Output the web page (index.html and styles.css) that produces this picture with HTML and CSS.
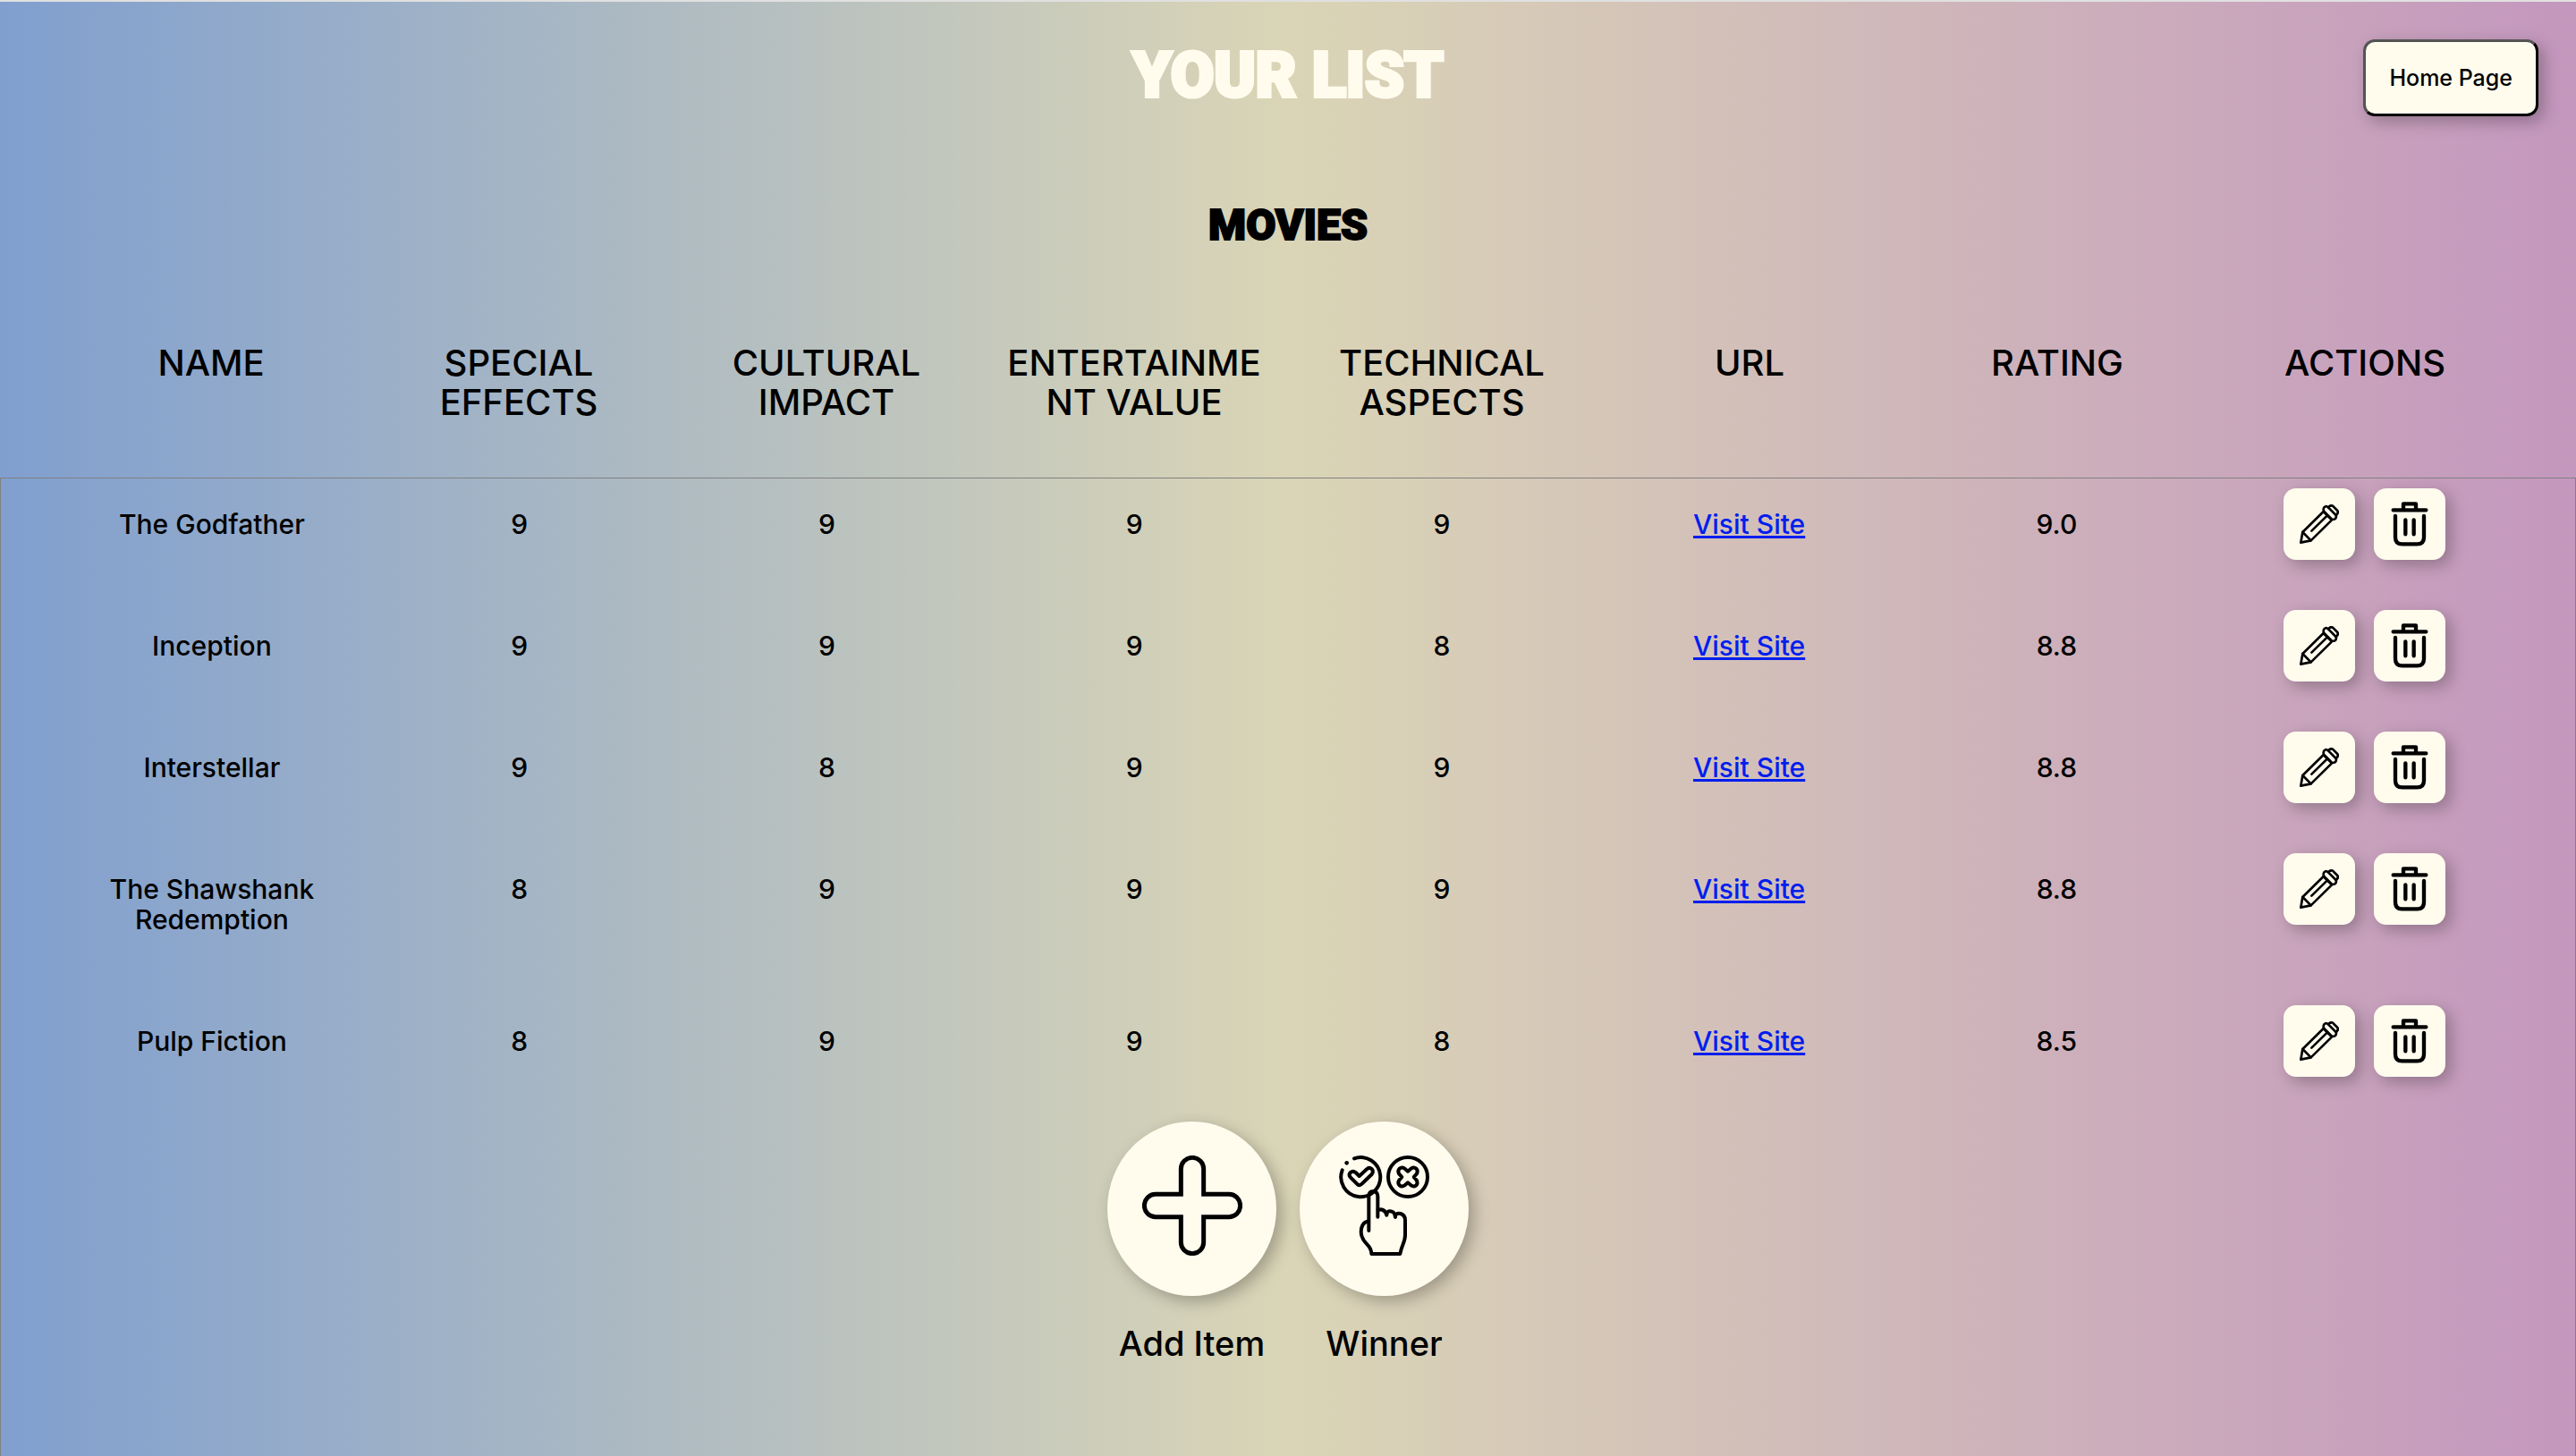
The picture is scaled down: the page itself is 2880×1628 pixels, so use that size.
FILE: index.html
```
<!DOCTYPE html>
<html lang="en">
<head>
<meta charset="utf-8">
<title>Your List</title>
<link rel="stylesheet" href="styles.css">
</head>
<body>
<svg class="sprite" aria-hidden="true">
  <symbol id="pencil" viewBox="0 0 132 132">
    <g fill="none" stroke="currentColor" stroke-width="8" stroke-linejoin="round" stroke-linecap="round">
      <path d="M4 128 10 93 80 24 108 52 38 121Z"/>
      <path d="M10 93 38 121M40 89 92 38"/>
      <path d="M82 10Q89 3 96 10L122 36Q125 44 118 49Q112 52 106 48L82 24Q78 17 82 10Z"/>
      <path d="M97 10Q103 1 111 5L127 21Q132 28 122 36"/>
    </g>
  </symbol>
  <symbol id="trash" viewBox="0 0 124 150">
    <g fill="none" stroke="currentColor" stroke-width="13" stroke-linecap="round">
      <path d="M7 28H117M41 24V7H83V24" stroke-linejoin="round"/>
      <path d="M14 48V119Q14 142 37 142H87Q110 142 110 119V48M48 61V109M76 61V109"/>
    </g>
  </symbol>
  <symbol id="plus" viewBox="0 0 336 336">
    <path d="M130 130V45A38 38 0 0 1 206 45V130H291A38 38 0 0 1 291 206H206V291A38 38 0 0 1 130 291V206H45A38 38 0 0 1 45 130Z" fill="none" stroke="currentColor" stroke-width="15"/>
  </symbol>
  <symbol id="vote" viewBox="0 0 336 336">
    <g fill="none" stroke="currentColor" stroke-width="12" stroke-linecap="round" stroke-linejoin="round">
      <path d="M66 10A66 66 0 1 1 26 49"/>
      <circle cx="246" cy="72" r="66"/>
      <path d="M53 57Q46 66 54 74L75 95Q83 104 92 95L125 63Q132 54 125 45Q116 38 108 46L83 69L71 57Q62 50 53 57Z"/>
      <path d="M246 53L258 43Q266 38 274 44Q281 51 276 61L266 72L276 84Q280 94 274 100Q266 106 258 101L246 91L234 101Q226 106 218 100Q211 93 216 84L226 72L216 61Q211 51 218 44Q226 38 234 43Z"/>
      <path d="M115 252V136Q116 120 130 120Q144 121 145 136V206"/>
      <path d="M146 182Q169 177 175 200Q176 181 195 189Q202 192 204 207Q204 191 221 195Q237 200 237 217V267Q237 280 229 300Q223 314 220 330H124Q123 312 110 299Q95 284 91 269Q86 250 94 234Q100 223 111 221"/>
    </g>
    <circle cx="41" cy="25" r="7" fill="currentColor"/>
  </symbol>
</svg>
<header class="topbar">
  <h1 class="title">YOUR LIST</h1>
  <button class="home" type="button">Home Page</button>
</header>
<main class="main">
  <h2 class="subtitle">MOVIES</h2>
  <table class="list">
    <thead>
      <tr><th>NAME</th><th>SPECIAL EFFECTS</th><th>CULTURAL IMPACT</th><th>ENTERTAINME<wbr>NT VALUE</th><th>TECHNICAL ASPECTS</th><th>URL</th><th>RATING</th><th>ACTIONS</th></tr>
    </thead>
    <tbody>
      <tr><td>The Godfather</td><td>9</td><td>9</td><td>9</td><td>9</td><td><a href="#">Visit Site</a></td><td>9.0</td>
        <td class="actions"><button type="button" aria-label="Edit"><svg class="pencil"><use href="#pencil"/></svg></button><button type="button" aria-label="Delete"><svg class="trash"><use href="#trash"/></svg></button></td></tr>
      <tr><td>Inception</td><td>9</td><td>9</td><td>9</td><td>8</td><td><a href="#">Visit Site</a></td><td>8.8</td>
        <td class="actions"><button type="button" aria-label="Edit"><svg class="pencil"><use href="#pencil"/></svg></button><button type="button" aria-label="Delete"><svg class="trash"><use href="#trash"/></svg></button></td></tr>
      <tr><td>Interstellar</td><td>9</td><td>8</td><td>9</td><td>9</td><td><a href="#">Visit Site</a></td><td>8.8</td>
        <td class="actions"><button type="button" aria-label="Edit"><svg class="pencil"><use href="#pencil"/></svg></button><button type="button" aria-label="Delete"><svg class="trash"><use href="#trash"/></svg></button></td></tr>
      <tr><td>The Shawshank Redemption</td><td>8</td><td>9</td><td>9</td><td>9</td><td><a href="#">Visit Site</a></td><td>8.8</td>
        <td class="actions"><button type="button" aria-label="Edit"><svg class="pencil"><use href="#pencil"/></svg></button><button type="button" aria-label="Delete"><svg class="trash"><use href="#trash"/></svg></button></td></tr>
      <tr><td>Pulp Fiction</td><td>8</td><td>9</td><td>9</td><td>8</td><td><a href="#">Visit Site</a></td><td>8.5</td>
        <td class="actions"><button type="button" aria-label="Edit"><svg class="pencil"><use href="#pencil"/></svg></button><button type="button" aria-label="Delete"><svg class="trash"><use href="#trash"/></svg></button></td></tr>
    </tbody>
  </table>
  <div class="footer">
    <div class="choice"><button type="button" id="add" aria-labelledby="add-label"><svg><use href="#plus"/></svg></button><label id="add-label" for="add">Add Item</label></div>
    <div class="choice"><button type="button" id="winner" aria-labelledby="winner-label"><svg><use href="#vote"/></svg></button><label id="winner-label" for="winner">Winner</label></div>
  </div>
</main>
</body>
</html>
```
FILE: styles.css
```
* { box-sizing: border-box; }

body {
  margin: 0;
  min-height: 100vh;
  display: flex;
  flex-direction: column;
  border-top: 2px solid #e0e0e0;
  background: linear-gradient(to right, #809fcf, #dad5b6, #c497be);
  color: #000;
  font-family: Inter, "Liberation Sans", sans-serif;
  font-size: 30px;
  font-weight: 500;
  line-height: 34px;
}

button {
  font-family: inherit;
  font-weight: inherit;
  color: #000;
  background: #fffcee;
  padding: 0;
  box-shadow: 6px 6px 18px rgba(0, 0, 0, 0.27);
}

svg { display: block; }
.sprite { display: none; }

.topbar {
  display: grid;
  grid-template-columns: 1fr auto 1fr;
  align-items: start;
  padding: 42px 42px 0;
}

.title, .subtitle {
  margin: 0;
  font-family: Roboto, sans-serif;
  font-weight: 900;
}

.title {
  grid-column: 2;
  font-size: 70px;
  line-height: 80px;
  color: #fffcee;
  -webkit-text-stroke: 4px #fffcee;
}

.home {
  justify-self: end;
  height: 86px;
  padding: 0 26px;
  border: 3px outset #000;
  border-radius: 13px;
  font-size: 25px;
}

.main {
  flex: 1;
  display: flex;
  flex-direction: column;
}

.subtitle {
  padding: 92px 0;
  text-align: center;
  font-size: 48px;
  line-height: 60px;
  -webkit-text-stroke: 2px #000;
}

.list, .list thead, .list tbody { display: block; }

.list tr {
  display: grid;
  grid-template-columns: repeat(8, 1fr);
  padding: 0 64px;
  text-align: center;
}

.list th {
  padding: 10px 24px 62px;
  font-size: 40px;
  font-weight: 500;
  line-height: 44px;
}

.list tbody { border: 1px solid #808080; border-bottom: 0; }
.list td { padding: 34px 40px 68px; }
.list a { color: #001eee; }

.list .actions {
  display: flex;
  justify-content: center;
  gap: 21px;
  padding: 11px 0 0;
}

.actions button {
  display: grid;
  place-items: center;
  width: 80px;
  height: 80px;
  border: 0;
  border-radius: 14px;
}

.pencil { width: 44px; height: 44px; }
.trash { width: 42px; height: 50px; }

.footer {
  flex: 1;
  display: flex;
  justify-content: center;
  gap: 26px;
  padding-top: 5px;
  border: 1px solid #808080;
  border-width: 0 1px;
}

.choice {
  display: flex;
  flex-direction: column;
  align-items: center;
  gap: 31px;
  width: 189px;
  font-size: 38px;
  line-height: 44px;
}

.choice button {
  display: flex;
  justify-content: center;
  width: 189px;
  height: 195px;
  padding-top: 38px;
  border: 0;
  border-radius: 50%;
}

.choice svg { width: 112px; height: 112px; }
```
